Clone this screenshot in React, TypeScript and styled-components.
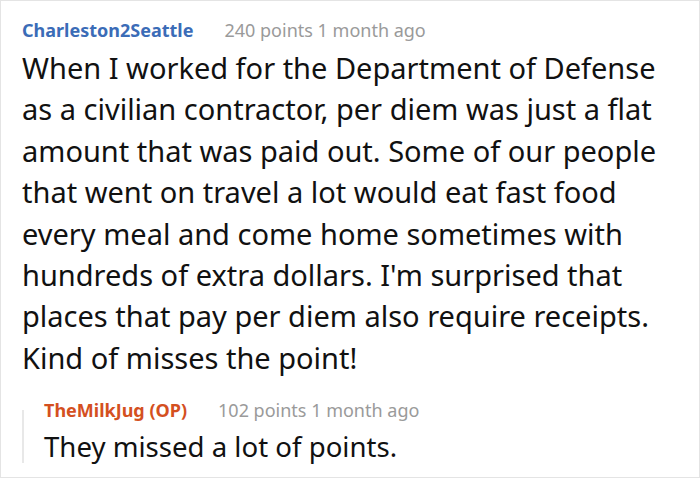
import React from 'react';
import styled, { createGlobalStyle } from 'styled-components';

const GlobalStyle = createGlobalStyle`
  html, body {
    margin: 0;
    padding: 0;
    background: #ffffff;
  }
  body {
    font-family: "Noto Sans", "Open Sans", sans-serif;
  }
`;

// ----------------------------------------------------------------------

const Card = styled.div`
  box-sizing: border-box;
  width: 700px;
  height: 478px;
  overflow: hidden;
  border: 1px solid #e4e4e4;
  background: #ffffff;
  padding: 17px 10px 0 21px;
`;

const Header = styled.div`
  display: flex;
  align-items: baseline;
  gap: 31px;
  font-size: 18px;
  line-height: 24px;
`;

const Author = styled.span<{ $op?: boolean }>`
  font-weight: 700;
  color: ${({ $op }) => ($op ? '#d4501f' : '#3b6cb7')};
`;

const Meta = styled.span`
  color: #9a9a9a;
`;

const Body = styled.p<{ $size?: number }>`
  margin: 5px 0 0;
  font-size: ${({ $size }) => $size ?? 29}px;
  line-height: 41.4px;
  color: #111111;
`;

const Reply = styled.div`
  position: relative;
  margin-top: 20px;
  padding-left: 22px;

  &::before {
    content: '';
    position: absolute;
    left: 0;
    top: 12px;
    bottom: 5px;
    width: 2px;
    background: #e8e8e8;
  }

  ${Body} {
    margin-top: 4px;
  }
`;

interface CommentProps {
  author: string
  points: number
  age: string
  op?: boolean
  size?: number
  children: React.ReactNode
}

const Comment = ({ author, points, age, op, size, children }: CommentProps) => (
  <>
    <Header>
      <Author $op={op}>{author}</Author>
      <Meta>{points} points {age}</Meta>
    </Header>
    <Body $size={size}>{children}</Body>
  </>
);

export default function App() {
  return (
    <>
      <GlobalStyle />
      <Card>
        <Comment author="Charleston2Seattle" points={240} age="1 month ago">
          When I worked for the Department of Defense as a civilian contractor, per diem was just a flat
          amount that was paid out. Some of our people that went on travel a lot would eat fast food every
          meal and come home sometimes with hundreds of extra dollars. I'm surprised that places that pay
          per diem also require receipts. Kind of misses the point!
        </Comment>
        <Reply>
          <Comment author="TheMilkJug (OP)" points={102} age="1 month ago" op size={27.6}>
            They missed a lot of points.
          </Comment>
        </Reply>
      </Card>
    </>
  );
}
